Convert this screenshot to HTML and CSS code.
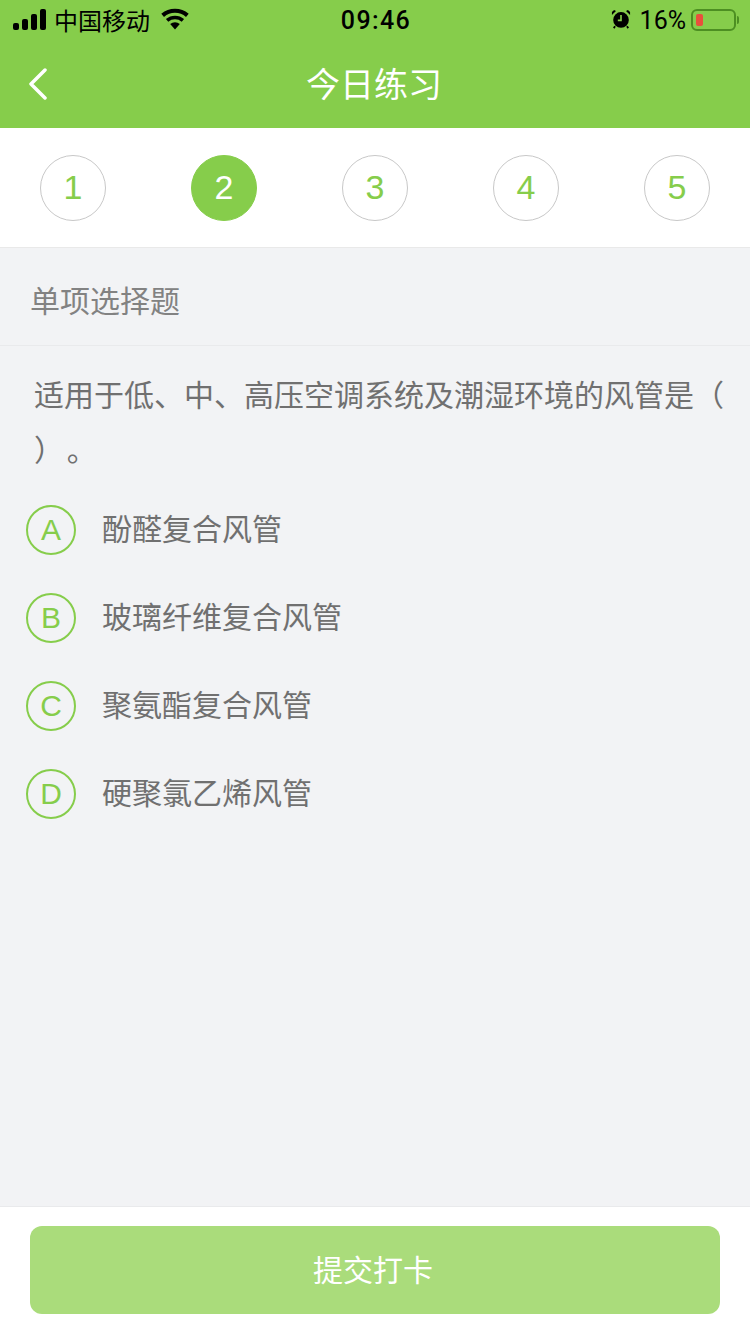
FILE: index.html
```html
<!DOCTYPE html>
<html lang="zh-CN">
<head>
    <meta charset="UTF-8">
    <meta name="viewport" content="width=device-width, initial-scale=1.0">
    <title>今日练习</title>
    <link rel="stylesheet" href="styles.css">
</head>
<body>
    <div class="page">
        <header class="header">
            <div class="status-bar">
                <div class="status-left">
                    <svg class="signal" width="34" height="22" viewBox="0 0 34 22">
                        <rect x="0" y="14" width="6" height="7" rx="2"/>
                        <rect x="9" y="10" width="6" height="11" rx="2"/>
                        <rect x="18" y="5" width="6" height="16" rx="2"/>
                        <rect x="27" y="0" width="6" height="21" rx="2"/>
                    </svg>
                    <span class="carrier">中国移动</span>
                    <svg class="wifi" width="30" height="22" viewBox="0 0 30 22">
                        <path d="M15 21.5 10.2 16a7.2 7.2 0 0 1 9.6 0z"/>
                        <path d="M8.3 13.8 5.9 11a14 14 0 0 1 18.2 0l-2.4 2.8a10.3 10.3 0 0 0-13.4 0z"/>
                        <path d="M4 8.9 1.3 5.8a21 21 0 0 1 27.4 0L26 8.9a17 17 0 0 0-22 0z"/>
                    </svg>
                </div>
                <div class="status-time">09:46</div>
                <div class="status-right">
                    <svg class="alarm" width="20" height="22" viewBox="0 0 22 22">
                        <circle cx="11" cy="12" r="8.6"/>
                        <path d="M1 6.5 5.5 2.2 3.4 1.2 1 3.4z"/>
                        <path d="M21 6.5 16.5 2.2 18.6 1.2 21 3.4z"/>
                        <path d="M4.5 19 3 21M17.5 19 19 21" stroke="#000" stroke-width="2"/>
                        <path class="alarm-hand" d="M11 6.5V12.5H7.5"/>
                    </svg>
                    <span class="battery-text">16%</span>
                    <div class="battery">
                        <div class="battery-body"><div class="battery-level"></div></div>
                        <div class="battery-cap"></div>
                    </div>
                </div>
            </div>
            <div class="nav">
                <svg class="back" width="20" height="32" viewBox="0 0 20 32">
                    <path d="M17 2 3 16l14 14"/>
                </svg>
                <h1 class="title">今日练习</h1>
            </div>
        </header>

        <div class="steps">
            <div class="step">1</div>
            <div class="step active">2</div>
            <div class="step">3</div>
            <div class="step">4</div>
            <div class="step">5</div>
        </div>

        <main class="main">
            <div class="type">单项选择题</div>
            <p class="question">适用于低、中、高压空调系统及潮湿环境的风管是（ ） 。</p>
            <div class="options">
                <div class="option"><span class="letter">A</span><span class="option-text">酚醛复合风管</span></div>
                <div class="option"><span class="letter">B</span><span class="option-text">玻璃纤维复合风管</span></div>
                <div class="option"><span class="letter">C</span><span class="option-text">聚氨酯复合风管</span></div>
                <div class="option"><span class="letter">D</span><span class="option-text">硬聚氯乙烯风管</span></div>
            </div>
        </main>

        <footer class="footer">
            <button class="submit">提交打卡</button>
        </footer>
    </div>
</body>
</html>
```

FILE: styles.css
```css
* {
    box-sizing: border-box;
}
body {
    margin: 0;
    font-family: "Liberation Sans", "Noto Sans CJK SC", sans-serif;
    background-color: #f2f3f5;
}
.page {
    display: flex;
    flex-direction: column;
    height: 1334px;
    overflow: hidden;
}
.header {
    height: 128px;
    background-color: #86cd4b;
}
.status-bar {
    display: grid;
    grid-template-columns: 1fr auto 1fr;
    align-items: center;
    height: 40px;
    padding: 0 11px 0 13px;
    color: #000;
}
.status-left,
.status-right {
    display: flex;
    align-items: center;
}
.status-right {
    justify-content: flex-end;
}
.signal {
    margin-bottom: 1px;
}
.carrier {
    margin-left: 7px;
    font-size: 24px;
    line-height: 30px;
    font-family: "Noto Sans CJK SC", sans-serif;
}
.wifi {
    margin-left: 10px;
    margin-bottom: 2px;
}
.status-time {
    font-size: 25px;
    font-weight: 500;
    letter-spacing: 1.4px;
    font-family: Roboto, sans-serif;
}
.alarm {
    margin-bottom: 2px;
}
.alarm-hand {
    fill: none;
    stroke: #86cd4b;
    stroke-width: 1.8;
}
.battery-text {
    margin-left: 9px;
    font-size: 25px;
    font-family: Roboto, sans-serif;
}
.battery {
    display: flex;
    align-items: center;
    margin-left: 5px;
}
.battery-body {
    width: 45px;
    height: 22px;
    padding: 3px;
    border: 2px solid #4d8f22;
    border-radius: 6px;
}
.battery-level {
    width: 7px;
    height: 100%;
    background-color: #e9503c;
    border-radius: 2px;
}
.battery-cap {
    width: 2px;
    height: 8px;
    margin-left: 1px;
    background-color: #4d8f22;
    border-radius: 0 2px 2px 0;
}
.nav {
    position: relative;
    display: flex;
    align-items: center;
    justify-content: center;
    height: 88px;
    padding: 0 2px 2px 0;
}
.back {
    position: absolute;
    left: 28px;
    top: 28px;
    fill: none;
    stroke: #fff;
    stroke-width: 3.5;
    stroke-linecap: round;
    stroke-linejoin: round;
}
.title {
    margin: 0;
    font-size: 34px;
    font-weight: 400;
    color: #fff;
    line-height: 86px;
    font-family: "Noto Sans CJK SC", sans-serif;
}
.steps {
    display: flex;
    justify-content: space-between;
    align-items: center;
    height: 120px;
    padding: 0 40px;
    background-color: #fff;
    border-bottom: 1px solid #e9e9e9;
}
.step {
    display: flex;
    align-items: center;
    justify-content: center;
    width: 66px;
    height: 66px;
    font-size: 34px;
    color: #86cd4b;
    border: 1px solid #c8c8c8;
    border-radius: 50%;
}
.step.active {
    color: #fff;
    background-color: #86cd4b;
    border-color: #86cd4b;
}
.main {
    flex: 1;
}
.type {
    height: 98px;
    padding-left: 30px;
    font-size: 30px;
    line-height: 103px;
    color: #828282;
    border-bottom: 1px solid #e9eaec;
    font-family: "Noto Sans CJK SC", sans-serif;
}
.question {
    margin: 0;
    padding: 20px 26px 0 34px;
    font-size: 30px;
    line-height: 55px;
    word-spacing: -4px;
    color: #707070;
    font-family: "Noto Sans CJK SC", sans-serif;
}
.options {
    display: flex;
    flex-direction: column;
    gap: 38px;
    margin-top: 29px;
    padding-left: 26px;
}
.option {
    display: flex;
    align-items: center;
    gap: 26px;
    height: 50px;
}
.letter {
    display: flex;
    align-items: center;
    justify-content: center;
    width: 50px;
    height: 50px;
    font-size: 30px;
    color: #86cd4b;
    border: 2px solid #86cd4b;
    border-radius: 50%;
}
.option-text {
    padding-bottom: 6px;
    font-size: 30px;
    color: #707070;
    font-family: "Noto Sans CJK SC", sans-serif;
}
.footer {
    height: 128px;
    padding: 19px 30px 0;
    background-color: #fff;
    border-top: 1px solid #e9eaec;
}
.submit {
    display: block;
    width: 100%;
    height: 88px;
    padding: 0 4px 4px 0;
    font-size: 30px;
    font-family: "Noto Sans CJK SC", sans-serif;
    color: #fff;
    background-color: #aadc7b;
    border: none;
    border-radius: 12px;
}
```
